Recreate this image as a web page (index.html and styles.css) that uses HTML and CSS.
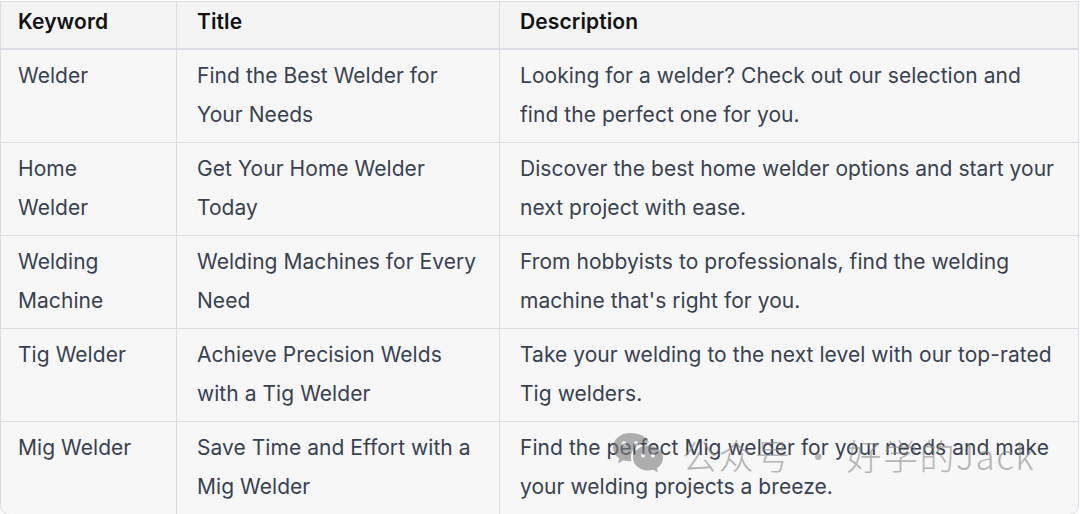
FILE: index.html
```html
<!DOCTYPE html>
<html>
<head>
<meta charset="utf-8">
<link rel="stylesheet" href="styles.css">
</head>
<body>
<div class="page">
  <table class="grid">
    <thead>
      <tr>
        <th class="c1">Keyword</th>
        <th class="c2">Title</th>
        <th class="c3">Description</th>
      </tr>
    </thead>
    <tbody>
      <tr>
        <td>Welder</td>
        <td>Find the Best Welder for Your Needs</td>
        <td>Looking for a welder? Check out our selection and find the perfect one for you.</td>
      </tr>
      <tr>
        <td>Home Welder</td>
        <td>Get Your Home Welder Today</td>
        <td>Discover the best home welder options and start your next project with ease.</td>
      </tr>
      <tr>
        <td>Welding Machine</td>
        <td>Welding Machines for Every Need</td>
        <td>From hobbyists to professionals, find the welding machine that's right for you.</td>
      </tr>
      <tr>
        <td>Tig Welder</td>
        <td>Achieve Precision Welds with a Tig Welder</td>
        <td>Take your welding to the next level with our top-rated Tig welders.</td>
      </tr>
      <tr>
        <td>Mig Welder</td>
        <td>Save Time and Effort with a Mig Welder</td>
        <td>Find the perfect Mig welder for your needs and make your welding projects a breeze.</td>
      </tr>
    </tbody>
  </table>
  <div class="watermark">
    <svg class="wm-icon" width="52" height="48" viewBox="0 0 52 48">
      <path d="M18 2C8.6 2 1 8.4 1 16.3c0 4.5 2.5 8.5 6.3 11.1L5.8 32.5l5.9-3.2c2 .6 4.1.9 6.3.9.5 0 1 0 1.5-.1-.4-1.3-.6-2.6-.6-4 0-8.2 7.8-14.5 17.2-14.5h1C35.4 6.1 27.5 2 18 2z" fill="#7d7d7d"/>
      <circle cx="12" cy="12.5" r="2.3" fill="#f7f7f8"/>
      <circle cx="24" cy="12.5" r="2.3" fill="#f7f7f8"/>
      <path d="M36 14.5c-8.3 0-15 5.6-15 12.5s6.7 12.5 15 12.5c1.8 0 3.6-.3 5.2-.8l4.8 2.7-1.2-4.3C48.6 34.8 51 31.1 51 27c0-6.9-6.7-12.5-15-12.5z" fill="#7d7d7d"/>
      <circle cx="31" cy="24.5" r="2" fill="#f7f7f8"/>
      <circle cx="41" cy="24.5" r="2" fill="#f7f7f8"/>
    </svg>
    <span class="wm-text">公众号 · 好学的Jack</span>
  </div>
</div>
</body>
</html>
```
FILE: styles.css
```css
html, body {
  margin: 0;
  padding: 0;
  background: #ffffff;
}

.page {
  position: relative;
  width: 1080px;
  height: 514px;
  padding-top: 1px;
  box-sizing: border-box;
  font-family: Inter, "Noto Sans", "Liberation Sans", sans-serif;
}

.grid {
  width: 1079px;
  border-collapse: separate;
  border-spacing: 0;
  table-layout: fixed;
  background: #f7f7f8;
  border: 1px solid #dcdce4;
  border-radius: 0 0 9px 9px;
  color: #374151;
  font-size: 21px;
  line-height: 39px;
}

.grid th,
.grid td {
  text-align: left;
  vertical-align: top;
  border-right: 1px solid #dcdce4;
  border-bottom: 1px solid #dcdce4;
  padding: 6px 20px 8px 20px;
  letter-spacing: 0.05px;
}

.grid th:last-child,
.grid td:last-child {
  border-right: none;
  padding-right: 16px;
}

.grid tbody tr:last-child td {
  border-bottom: none;
}

.grid td:first-child,
.grid th:first-child {
  padding-left: 17px;
  padding-right: 26px;
}

.grid th {
  background: #f4f4f5;
  color: #111111;
  font-weight: 600;
  letter-spacing: 0.1px;
  padding-top: 0;
  padding-bottom: 7px;
  border-bottom-width: 2px;
}

.c1 { width: 132px; }
.c2 { width: 282px; }
.c3 { width: 542px; }

.watermark {
  position: absolute;
  left: 612px;
  top: 431px;
  display: flex;
  align-items: center;
  gap: 18px;
  opacity: 0.6;
  pointer-events: none;
}

.wm-icon {
  display: block;
}

.wm-text {
  font-family: "Noto Sans CJK SC", "Noto Sans", sans-serif;
  font-size: 35px;
  font-weight: 300;
  color: #8a8a8a;
  letter-spacing: 1.5px;
  line-height: 48px;
}
```
